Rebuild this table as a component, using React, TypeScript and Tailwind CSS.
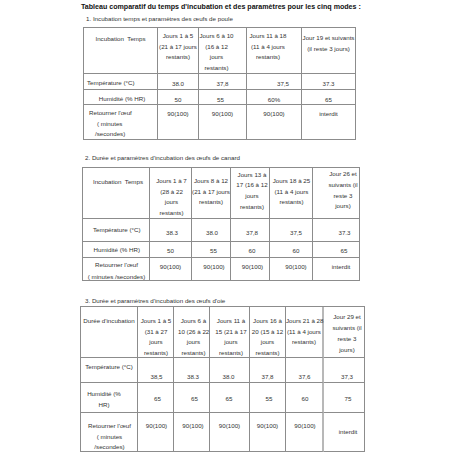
type Cell = {
  lines: string[];
  cls?: string;
  lh?: string;
  lineCls?: string[];
};

type Row = {
  lh: string;
  cells: Cell[];
};

type TableDef = {
  cls: string;
  rows: Row[];
};

// 1. poule
const poule: TableDef = {
  cls: "mt-[4px] ml-[83px] grid-cols-[74px_41px_48px_55px_54px] grid-rows-[46px_16px_15px_35px]",
  rows: [
    {
      lh: "leading-[10.7px]",
      cells: [
        { lines: ["Incubation  Temps"], cls: "pt-[6px]" },
        { lines: ["Jours 1 à 5", "(21 à 17 jours", "restants)"], cls: "pt-[3px]" },
        { lines: ["Jours 6 à 10", "(16 à 12", "jours", "restants)"], cls: "pt-[2.8px] pr-[12px]" },
        { lines: ["Jours 11 à 18", "(11 à 4 jours", "restants)"], cls: "pt-[3px] pr-[12px]" },
        { lines: ["Jour 19 et suivants", "(il reste 3 jours)"], cls: "pt-[4.8px]" },
      ],
    },
    {
      lh: "leading-[8px]",
      cells: [
        { lines: ["Température (°C)"], cls: "pt-[4.5px] text-left pl-[3px]" },
        { lines: ["38.0"], cls: "pt-[5.8px]" },
        { lines: ["37,8"], cls: "pt-[5.8px]" },
        { lines: ["37,5"], cls: "pt-[5.8px] pl-[18px]" },
        { lines: ["37.3"], cls: "pt-[5.8px]" },
      ],
    },
    {
      lh: "leading-[8px]",
      cells: [
        { lines: ["Humidité (% HR)"], cls: "pt-[4.5px] pl-[3px]" },
        { lines: ["50"], cls: "pt-[5.5px]" },
        { lines: ["55"], cls: "pt-[5.5px] pr-[4px]" },
        { lines: ["60%"], cls: "pt-[5.5px]" },
        { lines: ["65"], cls: "pt-[5.5px]" },
      ],
    },
    {
      lh: "leading-[10.7px]",
      cells: [
        {
          lines: ["Retourner l'œuf", "( minutes", "/secondes)"],
          cls: "pt-[3px] text-left",
          lineCls: ["pl-[5px]", "pl-[13px]", "pl-[11px]"],
        },
        { lines: ["90(100)"], cls: "pt-[4px]" },
        { lines: ["90(100)"], cls: "pt-[4px]" },
        { lines: ["90(100)"], cls: "pt-[4px]" },
        { lines: ["interdit"], cls: "pt-[4px]" },
      ],
    },
  ],
};

// 2. canard
const canard: TableDef = {
  cls: "mt-[5px] ml-[82px] grid-cols-[67px_42px_39px_39px_43px_47px] grid-rows-[51px_23px_16px_23px]",
  rows: [
    {
      lh: "leading-[10.7px]",
      cells: [
        { lines: ["Incubation  Temps"], cls: "pt-[9px] pl-[4px]" },
        { lines: ["Jours 1 à 7", "(28 à 22", "jours", "restants)"], cls: "pt-[7.8px] pl-[2px]" },
        { lines: ["Jours 8 à 12", "(21 à 17 jours", "restants)"], cls: "pt-[7.8px]" },
        { lines: ["Jours 13 à", "17 (16 à 12", "jours", "restants)"], cls: "pt-[1.5px] pl-[4px]" },
        { lines: ["Jours 18 à 25", "(11 à 4 jours", "restants)"], cls: "pt-[7.8px] pl-[1px]" },
        { lines: ["Jour 26 et", "suivants (il", "reste 3", "jours)"], cls: "pt-[1.2px] pl-[14px]" },
      ],
    },
    {
      lh: "leading-[8px]",
      cells: [
        { lines: ["Température (°C)"], cls: "pt-[6.5px] pl-[1.5px]" },
        { lines: ["38.3"], cls: "pt-[10.2px] pl-[3px]" },
        { lines: ["38.0"], cls: "pt-[10.2px] pl-[2px]" },
        { lines: ["37,8"], cls: "pt-[10.2px] pl-[4px]" },
        { lines: ["37,5"], cls: "pt-[10.2px] pl-[10px]" },
        { lines: ["37.3"], cls: "pt-[10.2px] pl-[17px]" },
      ],
    },
    {
      lh: "leading-[8px]",
      cells: [
        { lines: ["Humidité (% HR)"], cls: "pt-[3.8px] pl-[1.5px]" },
        { lines: ["50"], cls: "pt-[5.2px]" },
        { lines: ["55"], cls: "pt-[5.2px] pl-[5px]" },
        { lines: ["60"], cls: "pt-[5.2px] pl-[4px]" },
        { lines: ["60"], cls: "pt-[5.2px] pl-[10px]" },
        { lines: ["65"], cls: "pt-[5.2px] pl-[16px]" },
      ],
    },
    {
      lh: "leading-[8px]",
      cells: [
        { lines: ["Retourner l'œuf", "( minutes /secondes)"], cls: "pt-[1px] pl-[1px]", lh: "leading-[11.7px]" },
        { lines: ["90(100)"], cls: "pt-[5.2px]" },
        { lines: ["90(100)"], cls: "pt-[5.2px] pl-[6px]" },
        { lines: ["90(100)"], cls: "pt-[5.2px] pl-[5px]" },
        { lines: ["90(100)"], cls: "pt-[5.2px] pl-[10px]" },
        { lines: ["interdit"], cls: "pt-[5.2px] pl-[10px]" },
      ],
    },
  ],
};

// 3. oie — the line before the last column is drawn wider and lighter
const sep = "border-r-2 border-r-[#b8b8b8]";
const oie: TableDef = {
  cls: "mt-[1px] ml-[80px] grid-cols-[57px_36px_36px_40px_36px_38px_41px] grid-rows-[51px_25px_30px_39px]",
  rows: [
    {
      lh: "leading-[10.7px]",
      cells: [
        { lines: ["Durée d'incubation"], cls: "pt-[8.8px]" },
        { lines: ["Jours 1 à 5", "(31 à 27", "jours", "restants)"], cls: "pt-[8.8px] pl-[1px]" },
        { lines: ["Jours 6 à", "10 (26 à 22", "jours", "restants)"], cls: "pt-[8.8px] pl-[4px]" },
        { lines: ["Jours 11 à", "15 (21 à 17", "jours", "restants)"], cls: "pt-[8.8px] pl-[3px]" },
        { lines: ["Jours 16 à", "20 (15 à 12", "jours", "restants)"], cls: "pt-[8.8px]" },
        { lines: ["Jours 21 à 28", "(11 à 4 jours", "restants)"], cls: `pt-[8.8px] ${sep}` },
        { lines: ["Jour 29 et", "suivants (il", "reste 3", "jours)"], cls: "pt-[4.1px] pl-[6px]", lh: "leading-[11.1px]" },
      ],
    },
    {
      lh: "leading-[8px]",
      cells: [
        { lines: ["Température (°C)"], cls: "pt-[4.5px]" },
        { lines: ["38,5"], cls: "pt-[15.2px] pl-[2px]" },
        { lines: ["38.3"], cls: "pt-[15.2px] pl-[3px]" },
        { lines: ["38.0"], cls: "pt-[15.2px] pr-[2px]" },
        { lines: ["37,8"], cls: "pt-[15.2px]" },
        { lines: ["37,6"], cls: `pt-[15.2px] pl-[1px] ${sep}` },
        { lines: ["37,3"], cls: "pt-[15.2px] pl-[6px]" },
      ],
    },
    {
      lh: "leading-[8px]",
      cells: [
        { lines: ["Humidité (%", "HR)"], cls: "pt-[5px] pr-[10px]", lh: "leading-[11.4px]" },
        { lines: ["65"], cls: "pt-[12.2px] pl-[4px]" },
        { lines: ["65"], cls: "pt-[12.2px] pl-[6px]" },
        { lines: ["65"], cls: "pt-[12.2px] pr-[1px]" },
        { lines: ["55"], cls: "pt-[12.2px] pl-[3px]" },
        { lines: ["60"], cls: `pt-[12.2px] pl-[2px] ${sep}` },
        { lines: ["75"], cls: "pt-[12.2px] pl-[8px]" },
      ],
    },
    {
      lh: "leading-[8px]",
      cells: [
        { lines: ["Retourner l'œuf", "( minutes", "/secondes)"], cls: "pt-[7.8px] pl-[1px]", lh: "leading-[10.8px]" },
        { lines: ["90(100)"], cls: "pt-[9.2px] pl-[2px]" },
        { lines: ["90(100)"], cls: "pt-[9.2px] pl-[3px]" },
        { lines: ["90(100)"], cls: "pt-[9.2px]" },
        { lines: ["90(100)"], cls: "pt-[9.2px]" },
        { lines: ["90(100)"], cls: `pt-[9.2px] pl-[2px] ${sep}` },
        { lines: ["interdit"], cls: "pt-[14.5px] pl-[8px]" },
      ],
    },
  ],
};

function DocTable({ def }: { def: TableDef }) {
  return (
    <div className={`grid w-max border-l border-t border-[#8c8c8c] ${def.cls}`}>
      {def.rows.map((row, ri) =>
        row.cells.map((cell, ci) => (
          <div
            key={`${ri}-${ci}`}
            className={`border-r border-b border-[#8c8c8c] text-center whitespace-pre overflow-visible ${cell.lh ?? row.lh} ${cell.cls ?? ""}`}
          >
            {cell.lines.map((line, li) => (
              <div key={li} className={cell.lineCls?.[li] ?? ""}>
                {line}
              </div>
            ))}
          </div>
        ))
      )}
    </div>
  );
}

export default function App() {
  return (
    <div className="w-[452px] h-[452px] overflow-hidden bg-white text-[#333] text-[6.2px] font-['Liberation_Sans',Arial,sans-serif]">
      <div className="pt-[2px] ml-[81px] leading-[10px] text-[7.1px] font-bold text-[#111] whitespace-nowrap">
        Tableau comparatif du temps d'incubation et des paramètres pour les cinq modes :
      </div>

      <div className="mt-[3px] ml-[86px] leading-[8px] whitespace-nowrap">
        1. Incubation temps et paramètres des œufs de poule
      </div>
      <DocTable def={poule} />

      <div className="mt-[14px] ml-[85px] leading-[8px] whitespace-nowrap">
        2. Durée et paramètres d'incubation des œufs de canard
      </div>
      <DocTable def={canard} />

      <div className="mt-[16px] ml-[85px] leading-[8px] whitespace-nowrap">
        3. Durée et paramètres d'incubation des œufs d'oie
      </div>
      <DocTable def={oie} />
    </div>
  );
}
